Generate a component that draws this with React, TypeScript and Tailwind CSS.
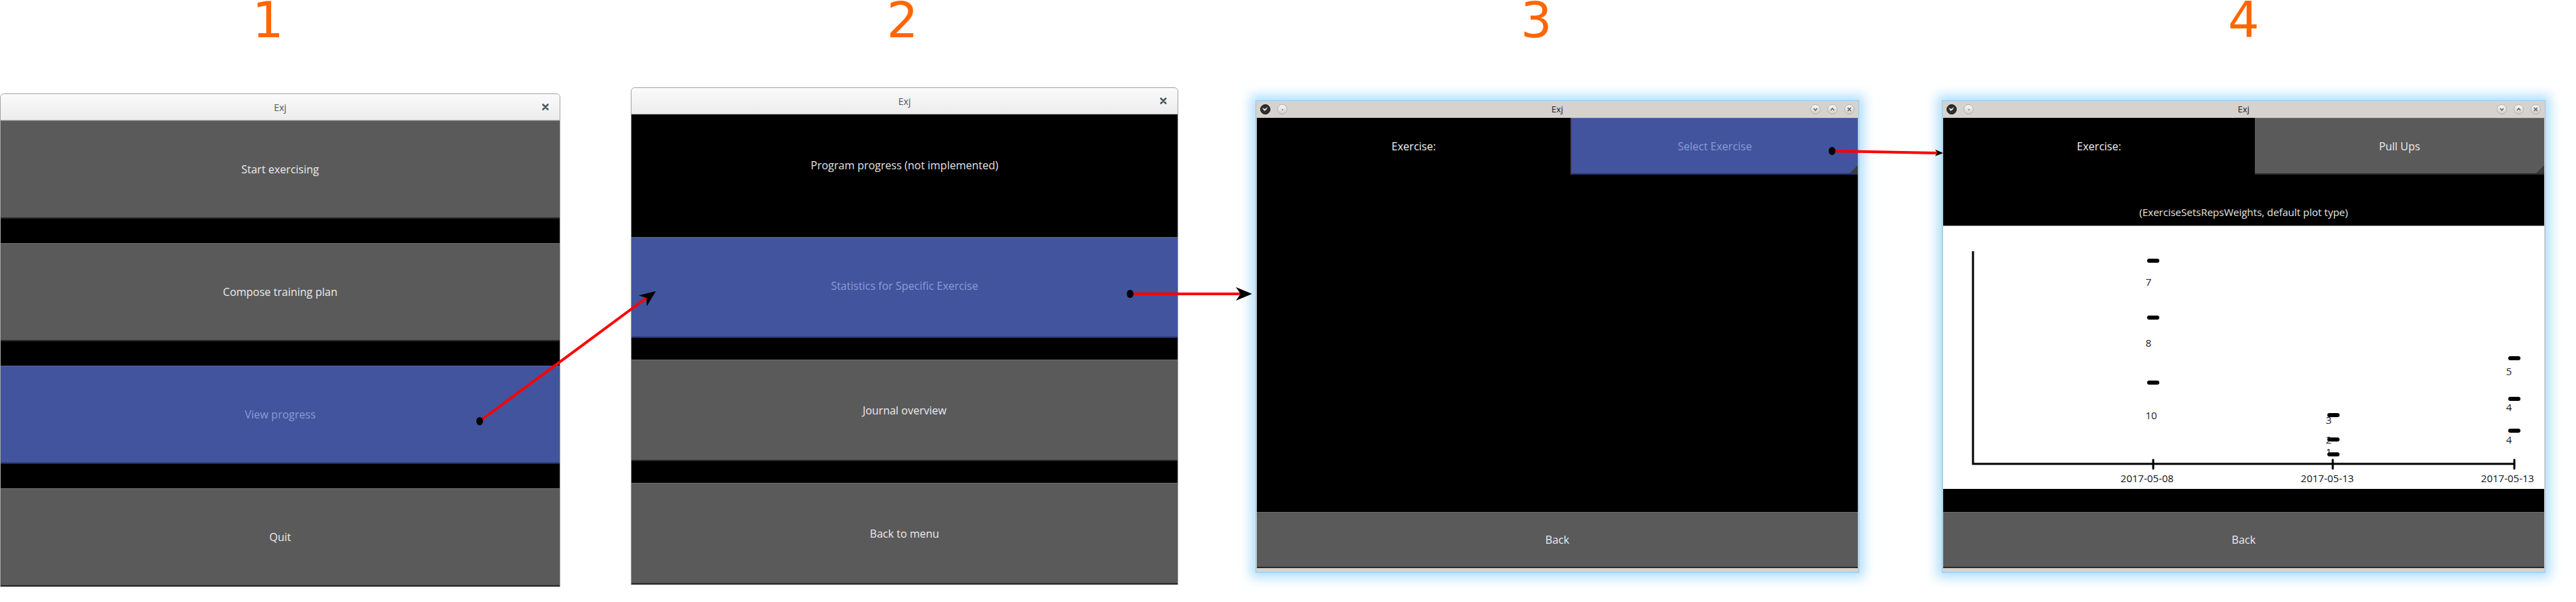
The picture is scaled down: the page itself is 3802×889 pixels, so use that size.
import React from "react";

// Kivy-like buttons
const btnGray =
  "flex items-center justify-center bg-[#5a5a5a] border-t border-t-[#707070] border-b-2 border-b-[#2a2a2a] text-[16px] text-[#ececec]";
const btnBlue =
  "flex items-center justify-center bg-[#41549d] border-t border-t-[#5666a8] border-b-2 border-b-[#24306a] text-[16px] text-[#8c9bd8]";

function Number({ n, shift }: { n: string; shift: string }) {
  return (
    <div
      className={`h-[60px] text-center leading-[60px] text-[73px] text-[#ff6600] font-['DejaVu_Sans',sans-serif] ${shift}`}
    >
      {n}
    </div>
  );
}

function GtkTitle() {
  return (
    <div className="h-[39px] grid grid-cols-[1fr_auto_1fr] items-center rounded-t-[6px] bg-linear-to-b from-[#fbfbfb] to-[#ececec] border-b border-[#b5b5b5] text-[14px] text-[#4b5961]">
      <div />
      <div>Exj</div>
      <div className="flex justify-end pr-[16px]">
        <svg width="10" height="10" viewBox="0 0 10 10">
          <path d="M1.5 1.5 L8.5 8.5 M8.5 1.5 L1.5 8.5" stroke="#4b5961" strokeWidth="2.6" strokeLinecap="round" />
        </svg>
      </div>
    </div>
  );
}

function KdeCircle({ children }: { children?: React.ReactNode }) {
  return (
    <div className="w-[15px] h-[15px] rounded-full border border-[#b3b0ad] bg-linear-to-b from-[#fafafa] to-[#cfcccb] flex items-center justify-center">
      {children}
    </div>
  );
}

function KdeTitle() {
  return (
    <div className="h-[25px] grid grid-cols-[1fr_auto_1fr] items-center px-[6px] text-[13px] text-[#222222]">
      <div className="flex items-center gap-[10px]">
        <div className="w-[15px] h-[15px] rounded-full bg-[#2e2e2e] border border-[#111111] flex items-center justify-center">
          <svg width="9" height="7" viewBox="0 0 9 7">
            <path d="M0 1 L4 3 L8 0 L6 4 L3 6 Z" fill="#e8e8e8" />
          </svg>
        </div>
        <KdeCircle>
          <div className="w-[2px] h-[2px] rounded-full bg-[#777777]" />
        </KdeCircle>
      </div>
      <div>Exj</div>
      <div className="flex items-center justify-end gap-[10px]">
        <KdeCircle>
          <svg width="7" height="5" viewBox="0 0 7 5">
            <path d="M1 1 L3.5 4 L6 1" stroke="#555555" strokeWidth="1.2" fill="none" />
          </svg>
        </KdeCircle>
        <KdeCircle>
          <svg width="7" height="5" viewBox="0 0 7 5">
            <path d="M1 4 L3.5 1 L6 4" stroke="#555555" strokeWidth="1.2" fill="none" />
          </svg>
        </KdeCircle>
        <KdeCircle>
          <svg width="7" height="7" viewBox="0 0 7 7">
            <path d="M1 1 L6 6 M6 1 L1 6" stroke="#555555" strokeWidth="1.2" />
          </svg>
        </KdeCircle>
      </div>
    </div>
  );
}

function SpinnerCorner() {
  return (
    <svg className="absolute right-0 bottom-0" width="12" height="12" viewBox="0 0 12 12">
      <path d="M12 0 L12 12 L0 12 Z" fill="#3a3a3a" />
    </svg>
  );
}

function KdeWindow({ children }: { children: React.ReactNode }) {
  return (
    <div className="w-[891px] flex flex-col bg-[#d6d2ce] border border-[#8fcdf4] shadow-[0_0_16px_7px_rgba(150,210,250,0.75)]">
      <KdeTitle />
      <div className="h-[665px] flex flex-col bg-black mx-[1px]">{children}</div>
      <div className="h-[6px]" />
    </div>
  );
}

function Plot() {
  const marks = [
    { x: 310, y: 51 },
    { x: 310, y: 135 },
    { x: 310, y: 231 },
    { x: 576, y: 279 },
    { x: 576, y: 315 },
    { x: 576, y: 337 },
    { x: 843, y: 195 },
    { x: 843, y: 255 },
    { x: 843, y: 302 },
  ];
  const labels = [
    { x: 303, y: 83, t: "7" },
    { x: 303, y: 173, t: "8" },
    { x: 307, y: 280, t: "10" },
    { x: 569, y: 287, t: "3" },
    { x: 569, y: 316, t: "2" },
    { x: 569, y: 334, t: "1" },
    { x: 835, y: 215, t: "5" },
    { x: 835, y: 268, t: "4" },
    { x: 835, y: 316, t: "4" },
  ];
  const ticks = [
    { x: 310, lx: 301, t: "2017-05-08" },
    { x: 575, lx: 567, t: "2017-05-13" },
    { x: 843, lx: 833, t: "2017-05-13" },
  ];
  return (
    <svg width="887" height="389" viewBox="0 0 887 389" className="font-['Open_Sans',sans-serif]">
      <path d="M44 37 L44 351 L843 351" stroke="#000" strokeWidth="3" fill="none" />
      {ticks.map((t, i) => (
        <g key={i}>
          <path d={`M${t.x} 345 L${t.x} 358`} stroke="#000" strokeWidth="3" strokeLinecap="round" />
          <text x={t.lx} y={378} textAnchor="middle" fontSize="15" fill="#111">
            {t.t}
          </text>
        </g>
      ))}
      {marks.map((m, i) => (
        <rect key={i} x={m.x - 9} y={m.y - 3} width="18" height="6" rx="3" fill="#000" />
      ))}
      {labels.map((l, i) => (
        <text key={i} x={l.x} y={l.y + 5} textAnchor="middle" fontSize="15" fill="#222">
          {l.t}
        </text>
      ))}
    </svg>
  );
}

function Arrowhead({ x, y, angle, scale = 1 }: { x: number; y: number; angle: number; scale?: number }) {
  return (
    <path
      d="M0 0 L-24 -10 L-17 0 L-24 10 Z"
      fill="#000"
      transform={`translate(${x} ${y}) rotate(${angle}) scale(${scale})`}
    />
  );
}

export default function App() {
  return (
    <div className="relative w-[3802px] h-[889px] bg-white overflow-hidden font-['Open_Sans',sans-serif]">
      <div className="flex items-start">
        {/* 1: main menu */}
        <div className="w-[827px] flex flex-col">
          <Number n="1" shift="mr-[36px]" />
          <div className="mt-[78px] border border-[#a3a3a3] rounded-t-[6px]">
            <GtkTitle />
            <div className="h-[688px] flex flex-col gap-[36px] bg-black">
              <div className={`${btnGray} h-[145px]`}>Start exercising</div>
              <div className={`${btnGray} h-[145px]`}>Compose training plan</div>
              <div className={`${btnBlue} h-[145px]`}>View progress</div>
              <div className={`${btnGray} h-[145px]`}>Quit</div>
            </div>
          </div>
        </div>

        {/* 2: progress menu */}
        <div className="w-[808px] ml-[104px] flex flex-col">
          <Number n="2" shift="mr-[6px]" />
          <div className="mt-[69px] border border-[#a3a3a3] rounded-t-[6px]">
            <GtkTitle />
            <div className="h-[694px] flex flex-col bg-black">
              <div className="h-[149px] flex items-center justify-center text-[16px] text-[#e4e4e4]">
                Program progress (not implemented)
              </div>
              <div className={`${btnBlue} h-[149px] mt-[32px] pb-[4px]`}>Statistics for Specific Exercise</div>
              <div className={`${btnGray} h-[150px] mt-[32px]`}>Journal overview</div>
              <div className={`${btnGray} h-[150px] mt-[32px]`}>Back to menu</div>
            </div>
          </div>
        </div>

        {/* 3: statistics, nothing selected */}
        <div className="w-[891px] ml-[114px] flex flex-col">
          <Number n="3" shift="mr-[62px]" />
          <div className="mt-[88px]">
            <KdeWindow>
              <div className="h-[84px] flex">
                <div className="w-[463px] flex items-center justify-center text-[16px] text-[#f0f0f0]">Exercise:</div>
                <div className={`${btnBlue} relative flex-1 border-l-2 border-l-[#4a4a4a]`}>
                  Select Exercise
                  <SpinnerCorner />
                </div>
              </div>
              <div className="flex-1" />
              <div className={`${btnGray} h-[83px]`}>Back</div>
            </KdeWindow>
          </div>
        </div>

        {/* 4: statistics for pull ups */}
        <div className="w-[891px] ml-[122px] flex flex-col">
          <Number n="4" shift="" />
          <div className="mt-[88px]">
            <KdeWindow>
              <div className="h-[84px] flex">
                <div className="w-[460px] flex items-center justify-center text-[16px] text-[#f0f0f0]">Exercise:</div>
                <div className={`${btnGray} relative flex-1`}>
                  Pull Ups
                  <SpinnerCorner />
                </div>
              </div>
              <div className="h-[75px] flex items-end justify-center pb-[9px] text-[15px] text-[#e6e6e6]">
                (ExerciseSetsRepsWeights, default plot type)
              </div>
              <div className="h-[389px] bg-white border-t border-[#9a9a9a]">
                <Plot />
              </div>
              <div className="h-[34px]" />
              <div className={`${btnGray} h-[83px]`}>Back</div>
            </KdeWindow>
          </div>
        </div>
      </div>

      {/* flow arrows between the screens */}
      <svg className="absolute top-0 left-0 pointer-events-none" width="3802" height="889" viewBox="0 0 3802 889">
        <path d="M708 622 L954 440" stroke="#ff0000" strokeWidth="4" />
        <ellipse cx="708" cy="622" rx="5" ry="6" fill="#000" />
        <Arrowhead x={968} y={430} angle={-36.4} />

        <path d="M1668 434 L1831 434" stroke="#ff0000" strokeWidth="4" />
        <ellipse cx="1668" cy="434" rx="5" ry="6" fill="#000" />
        <Arrowhead x={1848} y={434} angle={0} />

        <path d="M2704 223 L2860 226" stroke="#ff0000" strokeWidth="4" />
        <ellipse cx="2704" cy="223" rx="5" ry="6" fill="#000" />
        <Arrowhead x={2868} y={226} angle={1} scale={0.5} />
      </svg>
    </div>
  );
}
